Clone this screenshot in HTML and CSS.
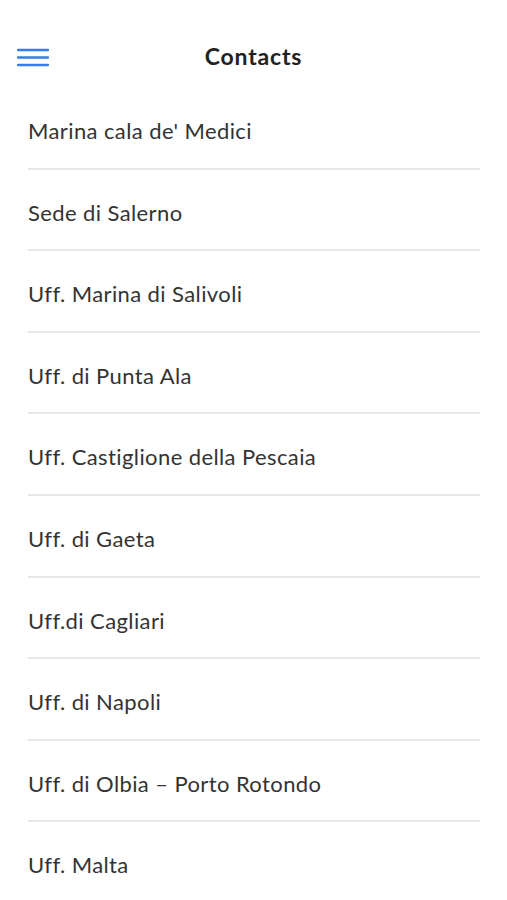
FILE: index.html
```html
<!DOCTYPE html>
<html lang="en">

<head>
  <meta charset="UTF-8">
  <meta name="viewport" content="width=device-width, initial-scale=1.0">
  <title>Contacts</title>
  <link rel="stylesheet" href="styles.css">
</head>

<body>
<div class="contacts_header">
  <div class="contacts_menu">
    <svg width="32" height="20" viewBox="0 0 32 20">
      <path d="M1 2h30M1 9.5h30M1 17h30" stroke="#3a7be8" stroke-width="2.4" stroke-linecap="round" fill="none"/>
    </svg>
  </div>
  <h1>Contacts</h1>
</div>
<ul class="contacts_list">
  <li>Marina cala de' Medici</li>
  <li>Sede di Salerno</li>
  <li>Uff. Marina di Salivoli</li>
  <li>Uff. di Punta Ala</li>
  <li>Uff. Castiglione della Pescaia</li>
  <li>Uff. di Gaeta</li>
  <li>Uff.di Cagliari</li>
  <li>Uff. di Napoli</li>
  <li>Uff. di Olbia – Porto Rotondo</li>
  <li>Uff. Malta</li>
</ul>
</body>

</html>
```

FILE: styles.css
```css
body,
h1,
ul,
li {
  padding: 0;
  margin: 0;
}

body {
  font-family: 'Lato', 'Noto Sans', sans-serif;
  color: #333;
  background: #fff;
  overflow: hidden;
}

.contacts_header {
  position: relative;
  padding: 44px 0 20px;
  text-align: center;
}

.contacts_header h1 {
  font-size: 23px;
  line-height: 24px;
  font-weight: 700;
  letter-spacing: 0.8px;
  color: #222;
}

.contacts_menu {
  position: absolute;
  left: 17px;
  top: 48px;
  line-height: 0;
}

.contacts_list {
  list-style: none;
  margin: 0 27px 0 28px;
}

.contacts_list li {
  font-size: 22px;
  line-height: 24px;
  letter-spacing: 0.4px;
  padding: 31px 0 24.6px;
  border-bottom: 2px solid #e8e8e8;
  color: #333;
}
```
